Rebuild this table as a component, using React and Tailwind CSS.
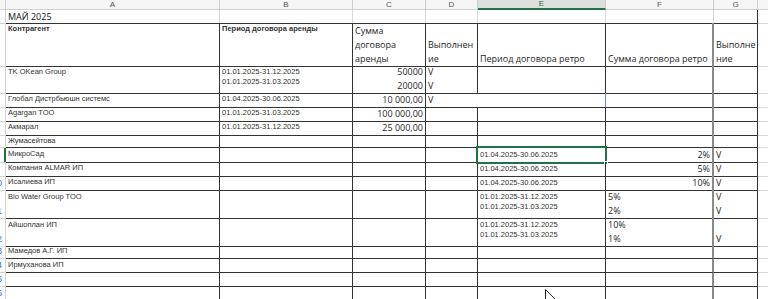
import React from "react";

const AR = "font-['Liberation_Sans',Arial,sans-serif]";
const CA = "font-['Open_Sans','Noto_Sans',sans-serif]";
const GRID = "grid grid-cols-[6px_214px_133px_73px_52px_128px_108px_44px_1fr]";
const DK = "border-r border-b border-[#333]";
const DKF = "border-r-2 border-b border-r-[#8a8a8a] border-b-[#333]";

function Rh({ n, sel, end }) {
  return (
    <div
      className={
        "flex justify-end overflow-hidden pr-[3px] text-[9px] leading-[11px] text-[#3a6fc9] border-b border-b-[#d4d4d4] " +
        AR +
        (end ? " items-end pb-[1px]" : " items-center") +
        (sel ? " border-r-2 border-r-[#217346]" : " border-r border-r-[#d4d4d4]")
      }
    >
      {n}
    </div>
  );
}

function Ar({ lines = [], bold, b = DK, extra = "" }) {
  return (
    <div
      className={
        "pl-[2px] pt-[1px] text-[7.5px] leading-[10px] text-[#333] whitespace-nowrap " +
        AR +
        (bold ? " font-bold text-[#222]" : "") +
        " " +
        b +
        " " +
        extra
      }
    >
      {lines.map((l, i) => (
        <div key={i}>{l}</div>
      ))}
    </div>
  );
}

function Ca({ lines = [], right, bottom, b = DK, extra = "" }) {
  return (
    <div
      className={
        "flex flex-col px-[2px] text-[9px] leading-[14px] text-[#1f1f1f] whitespace-nowrap " +
        CA +
        (right ? " items-end" : " items-start") +
        (bottom ? " justify-end" : " justify-start") +
        " " +
        b +
        " " +
        extra
      }
    >
      {lines.map((l, i) => (
        <div key={i} className="h-[14px]">
          {l}
        </div>
      ))}
    </div>
  );
}

function E() {
  return <div className={DK}></div>;
}
function EF() {
  return <div className={DKF}></div>;
}
function T() {
  return <div className="border-b border-[#dadada]"></div>;
}

function SimpleRow({ h = "h-[14px]", n, name, b, c, e, f, g, sel }) {
  return (
    <div className={GRID + " " + h}>
      <Rh n={n} sel={sel} />
      <Ar lines={[name]} />
      {b ? <Ar lines={[b]} /> : <E />}
      {c ? <Ca lines={[c]} right /> : <E />}
      <E />
      {e ? (
        <div className={"relative " + DK}>
          <div className={"pl-[2px] pt-[2px] text-[7.5px] leading-[10px] text-[#333] whitespace-nowrap " + AR}>{e}</div>
          {sel && (
            <div className="absolute left-[-2px] top-[-2px] right-[-2px] bottom-[-2px] border-2 border-[#217346]">
              <div className="absolute right-[-3px] bottom-[-3px] h-[4px] w-[4px] bg-[#217346] border border-white"></div>
            </div>
          )}
        </div>
      ) : (
        <E />
      )}
      {f ? <Ca lines={[f]} right b={DKF} /> : <EF />}
      {g ? <Ca lines={[g]} /> : <E />}
      <T />
    </div>
  );
}

export default function App() {
  const headers = [
    ["A", false],
    ["B", false],
    ["C", false],
    ["D", false],
    ["E", true],
    ["F", false],
    ["G", false],
  ];
  return (
    <div className="relative w-[768px] h-[299px] overflow-hidden bg-white">
      {/* column headers */}
      <div className={GRID + " h-[10px]"}>
        <div className="bg-[#f6f6f6] border-r border-b border-[#cfcfcf]"></div>
        {headers.map(([l, s]) =>
          s ? (
            <div
              key={l}
              className={
                "flex items-center justify-center bg-[#dedede] border-r border-r-[#cfcfcf] border-b-2 border-b-[#217346] text-[8px] leading-[8px] text-[#1e6b41] " +
                AR
              }
            >
              {l}
            </div>
          ) : (
            <div
              key={l}
              className={
                "flex items-center justify-center bg-[#f6f6f6] border-r border-b border-[#cfcfcf] text-[8px] leading-[8px] text-[#555] " +
                AR
              }
            >
              {l}
            </div>
          )
        )}
        <div className="bg-[#f6f6f6] border-b border-[#cfcfcf]"></div>
      </div>

      {/* row 1 title */}
      <div className={GRID + " h-[13px]"}>
        <Rh />
        <div className={"pl-[2px] text-[9px] leading-[13px] font-medium text-[#111] whitespace-nowrap border-r border-r-[#dadada] border-b border-b-[#333] " + CA}>
          МАЙ 2025
        </div>
        <div className="border-r border-r-[#dadada] border-b border-b-[#333]"></div>
        <div className="border-r border-r-[#dadada] border-b border-b-[#333]"></div>
        <div className="border-r border-r-[#dadada] border-b border-b-[#333]"></div>
        <div className="border-r border-r-[#dadada] border-b border-b-[#333]"></div>
        <div className="border-r border-r-[#dadada] border-b border-b-[#333]"></div>
        <div className="border-r border-r-[#333] border-b border-b-[#333]"></div>
        <T />
      </div>

      {/* row 2 headers */}
      <div className={GRID + " h-[42px]"}>
        <Rh />
        <Ar lines={["Контрагент"]} bold />
        <Ar lines={["Период договора аренды"]} bold />
        <Ca lines={["Сумма", "договора", "аренды"]} extra="pt-[1px]" />
        <Ca lines={["Выполнен", "ие"]} bottom />
        <Ca lines={["Период договора ретро"]} bottom />
        <Ca lines={["Сумма договора ретро"]} bottom b={DKF} />
        <Ca lines={["Выполне", "ние"]} bottom />
        <T />
      </div>

      {/* row 3 */}
      <div className={GRID + " h-[28px]"}>
        <Rh />
        <Ar lines={["TK OKean Group"]} extra="pt-[2px]" />
        <Ar lines={["01.01.2025-31.12.2025", "01.01.2025-31.03.2025"]} extra="pt-[2px]" />
        <Ca lines={["50000", "20000"]} right />
        <Ca lines={["V", "V"]} />
        <E />
        <EF />
        <E />
        <T />
      </div>

      {/* row 4 */}
      <div className={GRID + " h-[14px]"}>
        <Rh />
        <Ar lines={["Глобал Дистрбьюшн системс"]} />
        <Ar lines={["01.04.2025-30.06.2025"]} />
        <Ca lines={["10 000,00"]} right />
        <Ca lines={["V"]} b="border-b border-b-[#333]" />
        <div className="border-r border-r-[#5b8fd6] border-b border-b-[#333]"></div>
        <EF />
        <E />
        <T />
      </div>

      <SimpleRow name="Agargan TOO" b="01.01.2025-31.03.2025" c="100 000,00" />
      <SimpleRow name="Акмарал" b="01.01.2025-31.12.2025" c="25 000,00" />
      <SimpleRow h="h-[13px]" name="Жумасейтова" />
      <SimpleRow name="МикроСад" e="01.04.2025-30.06.2025" f="2%" g="V" sel />
      <SimpleRow name="Компания ALMAR ИП" e="01.04.2025-30.06.2025" f="5%" g="V" />
      <SimpleRow name="Исалиева ИП" e="01.04.2025-30.06.2025" f="10%" g="V" n="0" />

      {/* row 11 */}
      <div className={GRID + " h-[28px]"}>
        <Rh n="1" end />
        <Ar lines={["Bio Water Group TOO"]} extra="pt-[2px]" />
        <E />
        <E />
        <E />
        <Ar lines={["01.01.2025-31.12.2025", "01.01.2025-31.03.2025"]} extra="pt-[2px]" />
        <Ca lines={["5%", "2%"]} b={DKF} />
        <Ca lines={["V", "V"]} />
        <T />
      </div>

      {/* row 12 */}
      <div className={GRID + " h-[27px]"}>
        <Rh n="2" end />
        <Ar lines={["Айшоплан ИП"]} extra="pt-[2px]" />
        <E />
        <E />
        <E />
        <Ar lines={["01.01.2025-31.12.2025", "01.01.2025-31.03.2025"]} extra="pt-[2px]" />
        <Ca lines={["10%", "1%"]} b={DKF} />
        <Ca lines={["", "V"]} />
        <T />
      </div>

      <SimpleRow name="Мамедов А.Г. ИП" n="3" />
      <SimpleRow name="Ирмуханова ИП" n="4" />
      <SimpleRow name="" n="5" />
      <SimpleRow name="" n="6" />

      {/* mouse pointer */}
      <svg
        className="absolute left-[545px] top-[289px]"
        width="13"
        height="20"
        viewBox="0 0 13 20"
      >
        <path
          d="M0.5 0.5 L0.5 16 L4.2 12.4 L6.8 18.6 L9 17.6 L6.5 11.6 L11.5 11.6 Z"
          fill="#ffffff"
          stroke="#222"
          strokeWidth="1"
          strokeLinejoin="round"
        />
      </svg>
    </div>
  );
}
